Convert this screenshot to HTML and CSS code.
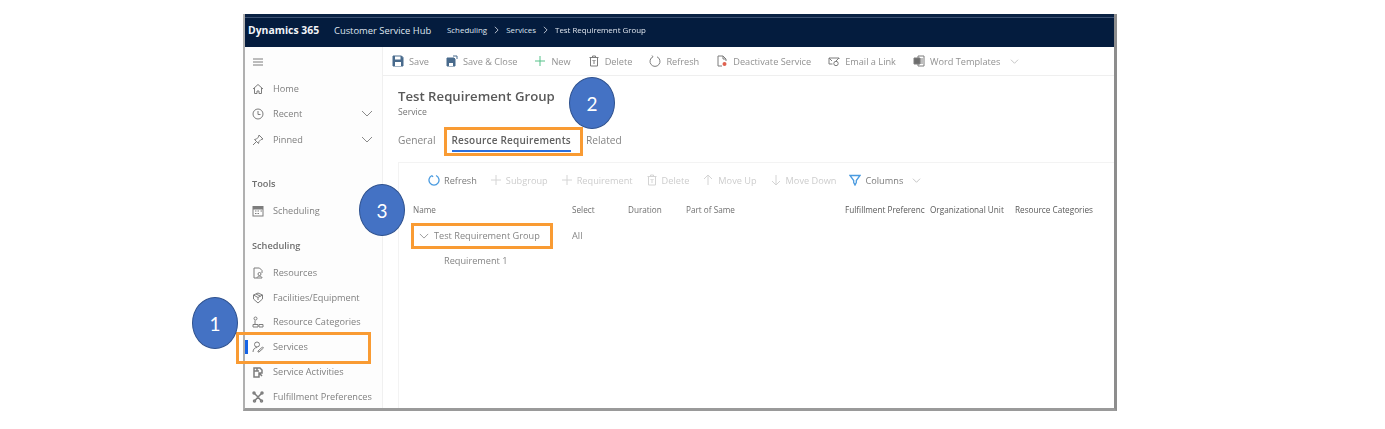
FILE: index.html
```html
<!DOCTYPE html>
<html lang="en">
<head>
    <meta charset="UTF-8">
    <title>Test Requirement Group</title>
    <link rel="stylesheet" href="styles.css">
</head>
<body>
    <div class="shot">
        <div class="topbar">
            <span class="brand">Dynamics 365</span>
            <span class="app">Customer Service Hub</span>
            <span class="crumbs">
                <span class="crumb-first">Scheduling</span>
                <svg class="sep" viewBox="0 0 6 10"><path d="M1 1l4 4-4 4"/></svg>
                <span>Services</span>
                <svg class="sep" viewBox="0 0 6 10"><path d="M1 1l4 4-4 4"/></svg>
                <span>Test Requirement Group</span>
            </span>
        </div>
        <div class="content">
            <nav class="sidebar">
                <div class="burger"><svg class="icon" viewBox="0 0 12 12"><path d="M1 3h10M1 6h10M1 9h10"/></svg></div>
                <div class="nav-item"><svg class="icon" viewBox="0 0 12 12"><path d="M1 6l5-4.500L11 6M2.500 5v5.500h2.500V8h2v2.500h2.500V5"/></svg>Home</div>
                <div class="nav-item"><svg class="icon" viewBox="0 0 12 12"><circle cx="6" cy="6" r="5"/><path d="M6 3v3.500h2.500"/></svg>Recent<svg class="chev" viewBox="0 0 12 7"><path d="M1 1l5 5 5-5"/></svg></div>
                <div class="nav-item pinned"><svg class="icon" viewBox="0 0 12 12"><path d="M7 1l4 4-2 .5-2 2-.5 2L2.500 5.500l2-.5 2-2zM4.500 7.500L1 11"/></svg>Pinned<svg class="chev" viewBox="0 0 12 7"><path d="M1 1l5 5 5-5"/></svg></div>
                <div class="nav-head tools">Tools</div>
                <div class="nav-item sched"><svg class="icon" viewBox="0 0 12 12"><rect x="1" y="1.500" width="10" height="9.500"/><path class="thick" d="M1 3h10"/><path d="M3 6h1.500M5.500 6H7M8.500 6H10M3 8.500h1.500M5.500 8.500H7"/></svg>Scheduling</div>
                <div class="nav-head group">Scheduling</div>
                <div class="nav-item res"><svg class="icon" viewBox="0 0 12 12"><path d="M7.500 1H2v10h3M7.500 1L10 3.500V6"/><circle cx="7.500" cy="7" r="1.500"/><path d="M5 11c0-2.500 5-2.500 5 0z"/></svg>Resources</div>
                <div class="nav-item"><svg class="icon" viewBox="0 0 12 12"><path d="M6 1l4.500 2v4L6 11 1.500 7V3zM1.500 3L6 5.500 10.500 3M6 5.500V8M4 2l4.500 2.200"/></svg>Facilities/Equipment</div>
                <div class="nav-item tight"><svg class="icon" viewBox="0 0 12 12"><circle cx="3.500" cy="2.500" r="1.500"/><path d="M3 4.500V8M1 8.500h5v2.500H1zM7 8.500h4v2.500H7z"/></svg>Resource Categories</div>
                <div class="nav-item current"><svg class="icon" viewBox="0 0 12 12"><circle cx="5" cy="3.500" r="2.500"/><path d="M1 11c0-3 2-4.500 4-4.500M6 10l4.500-4 1 1-4.500 4H6z"/></svg>Services</div>
                <div class="nav-item"><svg class="icon heavy" viewBox="0 0 12 12"><path d="M2 2h6l2 2v3H7v4H2zM2 5h5M7 7l3 3M5 2v3"/></svg>Service Activities</div>
                <div class="nav-item"><svg class="icon heavy" viewBox="0 0 12 12"><path d="M2.500 2.500L6 6l3.500-3.500M6 6l-3 3.500M6 6l3 3.500"/><circle cx="2" cy="2" r="1"/><circle cx="10" cy="2" r="1"/><circle cx="2.500" cy="10" r="1"/><circle cx="9.500" cy="10" r="1"/></svg>Fulfillment Preferences</div>
            </nav>
            <main class="main">
                <div class="cmdbar">
                    <span class="cmd"><svg class="icon save" viewBox="0 0 12 12"><path d="M1 1h8.500L11 2.500V11H1z"/><path class="wht" d="M3 1.500h5.500V4.500H3zM3 7h6v4H3z"/></svg>Save</span>
                    <span class="cmd"><svg class="icon save" viewBox="0 0 12 12"><path d="M1 3h7l1 1v7H1z"/><path class="wht" d="M3 8h4v3H3z"/><path d="M7 1h4v3" fill="none"/></svg>Save &amp; Close</span>
                    <span class="cmd"><svg class="icon plus-green" viewBox="0 0 12 12"><path d="M6 1v10M1 6h10"/></svg>New</span>
                    <span class="cmd"><svg class="icon" viewBox="0 0 12 12"><path d="M2.500 2.500h7V11h-7zM1.500 2.500h9M4.500 2.500V1h3v1.500M5 5v1h2V5M5 8h2"/></svg>Delete</span>
                    <span class="cmd"><svg class="icon" viewBox="0 0 12 12"><path d="M4 1.800A5 5 0 1 0 8 1.800M4 1.800l-1-1.300"/></svg>Refresh</span>
                    <span class="cmd"><svg class="icon" viewBox="0 0 12 12"><path d="M2 1h5l3 3v2M7 1v3h3M2 1v10h4"/><circle class="red" cx="8.500" cy="9" r="2"/></svg>Deactivate Service</span>
                    <span class="cmd"><svg class="icon" viewBox="0 0 12 12"><path d="M1 3h10v1M1 3v6h3.500M1 3l3 3M11 3L8 6"/><circle cx="8" cy="8.500" r="2.200"/></svg>Email a Link</span>
                    <span class="cmd"><svg class="icon word" viewBox="0 0 12 12"><path d="M5 1h6v10H5z" fill="none"/><path d="M1 3h6v6H1z"/><path d="M7 4h3M7 6h3M7 8h3" fill="none"/></svg>Word Templates<svg class="chev small" viewBox="0 0 12 7"><path d="M1 1l5 5 5-5"/></svg></span>
                </div>
                <div class="form">
                    <h1 class="title">Test Requirement Group</h1>
                    <div class="subtitle">Service</div>
                    <div class="tabs">
                        <span class="tab">General</span>
                        <span class="tab active">Resource Requirements</span>
                        <span class="tab">Related</span>
                    </div>
                    <section class="panel">
                        <div class="toolbar">
                            <span class="tool on"><svg class="icon blue" viewBox="0 0 12 12"><path d="M4 1.500A5 5 0 1 0 8 1.500M4 1.500l1 1.500"/></svg>Refresh</span>
                            <span class="tool"><svg class="icon faint" viewBox="0 0 12 12"><path d="M6 1v10M1 6h10"/></svg>Subgroup</span>
                            <span class="tool"><svg class="icon faint" viewBox="0 0 12 12"><path d="M6 1v10M1 6h10"/></svg>Requirement</span>
                            <span class="tool"><svg class="icon faint" viewBox="0 0 12 12"><path d="M2.500 2.500h7V11h-7zM1.500 2.500h9M4.500 2.500V1h3v1.500M5 5v1h2V5M5 8h2"/></svg>Delete</span>
                            <span class="tool"><svg class="icon faint" viewBox="0 0 12 12"><path d="M6 11V1M2 5l4-4 4 4"/></svg>Move Up</span>
                            <span class="tool"><svg class="icon faint" viewBox="0 0 12 12"><path d="M6 1v10M2 7l4 4 4-4"/></svg>Move Down</span>
                            <span class="tool on"><svg class="icon blue" viewBox="0 0 12 12"><path d="M1 1.500h10L7.300 6.500v2L6 11 4.700 8.500v-2z"/></svg>Columns<svg class="chev small" viewBox="0 0 12 7"><path d="M1 1l5 5 5-5"/></svg></span>
                        </div>
                        <div class="grid grid-head">
                            <span>Name</span>
                            <span>Select</span>
                            <span>Duration</span>
                            <span>Part of Same</span>
                            <span class="clip">Fulfillment Preference</span>
                            <span>Organizational Unit</span>
                            <span>Resource Categories</span>
                        </div>
                        <div class="grid row first">
                            <span class="group-name"><svg class="chev tiny" viewBox="0 0 12 7"><path d="M1 1l5 5 5-5"/></svg>Test Requirement Group</span>
                            <span>All</span>
                        </div>
                        <div class="grid row child">
                            <span>Requirement 1</span>
                        </div>
                    </section>
                </div>
            </main>
        </div>
    </div>

    <!-- annotations drawn on top of the screenshot -->
    <div class="mark mark-services"></div>
    <div class="mark mark-tab"></div>
    <div class="mark mark-group"></div>
    <div class="bubble bubble-1">1</div>
    <div class="bubble bubble-2">2</div>
    <div class="bubble bubble-3">3</div>
</body>
</html>
```

FILE: styles.css
```css
body {
    margin: 0;
    padding: 14px 0 0 243px;
    background: #ffffff;
    font-family: "Open Sans", Arial, sans-serif;
    color: #6a6a6a;
    overflow: hidden;
}

.shot {
    width: 874px;
    height: 397px;
    box-sizing: border-box;
    border-right: 3px solid #8d8d8d;
    border-bottom: 3px solid #9a9a9a;
    border-left: 2px solid #b0b0b0;
    display: flex;
    flex-direction: column;
    overflow: hidden;
    filter: blur(0.6px);
}

.topbar {
    height: 33px;
    flex: none;
    background: linear-gradient(#0a2244 0 3px, #3d5273 3px 4px, #041c3e 4px);
    box-sizing: border-box;
    display: flex;
    align-items: center;
    color: #dfe5ee;
    padding: 0 0 1px 3px;
    white-space: nowrap;
}

.brand {
    font-size: 10.400px;
    font-weight: 700;
    color: #f2f4f8;
    width: 86px;
}

.app {
    font-size: 9.400px;
    width: 113px;
}

.crumbs {
    display: flex;
    align-items: center;
    font-size: 7.900px;
    gap: 7px;
}

.sep {
    width: 5px;
    height: 8px;
    fill: none;
    stroke: #dfe5ee;
    stroke-width: 1;
}

.content {
    flex: 1;
    display: flex;
    min-height: 0;
}

.sidebar {
    width: 138px;
    flex: none;
    background: #fdfdfd;
    border-right: 1px solid #f0f0f0;
    box-sizing: border-box;
    font-size: 9.200px;
    color: #7f7f7f;
}

.icon {
    width: 12px;
    height: 12px;
    flex: none;
    fill: none;
    stroke: #7d7d7d;
    stroke-width: 1;
}

.icon.heavy {
    stroke-width: 1.500;
}

.icon .thick {
    stroke-width: 3;
}

.burger {
    height: 29px;
    padding-left: 7px;
    display: flex;
    align-items: center;
}

.nav-item {
    height: 25px;
    padding-left: 7px;
    display: flex;
    align-items: center;
    gap: 9px;
    white-space: nowrap;
    position: relative;
}

.nav-item .chev {
    margin-left: auto;
    margin-right: 9px;
}

.chev {
    width: 12px;
    height: 7px;
    fill: none;
    stroke: #8a8a8a;
    stroke-width: 1;
}

.chev.small {
    width: 9px;
    height: 5px;
    stroke: #b0b0b0;
    margin-left: 5px;
}

.chev.tiny {
    width: 10px;
    height: 6px;
    margin-right: 5px;
    margin-left: 6px;
}

.nav-head {
    height: 24px;
    padding-left: 7px;
    display: flex;
    align-items: center;
    font-weight: 600;
    color: #6e6e6e;
}

.pinned {
    margin-top: 1px;
}

.tools {
    margin-top: 19px;
}

.sched {
    margin-top: 3px;
}

.group {
    margin-top: 10px;
}

.res {
    margin-top: 3px;
}

.tight {
    margin-top: -1px;
}

.current::before {
    content: "";
    position: absolute;
    left: 0;
    top: 6px;
    width: 2.500px;
    height: 14px;
    background: #1463e6;
}

.main {
    flex: 1;
    min-width: 0;
    display: flex;
    flex-direction: column;
}

.cmdbar {
    height: 29px;
    flex: none;
    box-sizing: border-box;
    border-bottom: 1px solid #efefef;
    display: flex;
    align-items: center;
    padding-left: 9px;
    gap: 17px;
    font-size: 9.200px;
    color: #919191;
    white-space: nowrap;
}

.cmd {
    display: flex;
    align-items: center;
    gap: 5px;
}

.icon.save {
    fill: #486a8c;
    stroke: #486a8c;
}

.icon.save .wht {
    fill: #ffffff;
    stroke: none;
}

.icon.plus-green {
    stroke: #56c28a;
}

.red {
    fill: #e0614f;
    stroke: none;
}

.icon.word path:nth-child(2) {
    fill: #6d6d6d;
}

.form {
    flex: 1;
    min-height: 0;
    padding: 11px 0 0 15px;
}

.title {
    margin: 0;
    font-size: 13.200px;
    line-height: 19px;
    font-weight: 600;
    color: #595959;
}

.subtitle {
    font-size: 8.700px;
    line-height: 12px;
    color: #757575;
}

.tabs {
    display: flex;
    margin-top: 12px;
    height: 24px;
    gap: 16px;
    font-size: 10.200px;
    color: #858585;
    line-height: 20px;
}

.tab.active {
    font-weight: 600;
    color: #606060;
    font-size: 10px;
    letter-spacing: 0.02em;
    height: 20px;
    border-bottom: 2px solid #2c6fdc;
}

.tab:last-child {
    margin-left: -1px;
}

.panel {
    margin-top: 8px;
    height: 260px;
    border-top: 1px solid #f3f3f3;
    border-left: 1px solid #f3f3f3;
}

.toolbar {
    height: 34px;
    display: flex;
    align-items: center;
    padding-left: 29px;
    gap: 13px;
    font-size: 9.200px;
    color: #cdcdcd;
    white-space: nowrap;
}

.tool {
    display: flex;
    align-items: center;
    gap: 4px;
}

.tool.on {
    color: #7b7b7b;
}

.icon.blue {
    stroke: #4a9be0;
    stroke-width: 1.300;
}

.icon.faint {
    stroke: #d4d4d4;
}

.grid {
    display: grid;
    grid-template-columns: 159px 56px 58px 159px 85px 85px 1fr;
    padding-left: 14px;
    white-space: nowrap;
}

.grid-head {
    height: 22px;
    align-items: center;
    font-size: 8.200px;
    color: #6f6f6f;
    margin-top: 1px;
}

.clip {
    overflow: hidden;
    width: 80px;
}

.grid-head span:nth-child(n+5) {
    color: #595959;
}

.row {
    height: 25px;
    align-items: center;
    font-size: 9.200px;
    color: #858585;
}

.row.first {
    margin-top: 3px;
}

.group-name {
    display: flex;
    align-items: center;
}

.child {
    padding-left: 45px;
    grid-template-columns: 1fr;
}

.mark {
    position: absolute;
    box-sizing: border-box;
    border: 3px solid #f99b33;
}

.mark-services {
    left: 236px;
    top: 332px;
    width: 135px;
    height: 32px;
}

.mark-tab {
    left: 444px;
    top: 127px;
    width: 139px;
    height: 29px;
}

.mark-group {
    left: 411px;
    top: 223px;
    width: 142px;
    height: 26px;
}

.bubble {
    position: absolute;
    width: 46px;
    height: 52px;
    box-sizing: border-box;
    border: 1px solid #2f528f;
    border-radius: 50%;
    background: #4472c4;
    color: #ffffff;
    font-family: Lato, "Open Sans", sans-serif;
    font-size: 19px;
    display: flex;
    align-items: center;
    justify-content: center;
}

.bubble-1 {
    left: 192px;
    top: 297px;
}

.bubble-2 {
    left: 569px;
    top: 77px;
}

.bubble-3 {
    left: 359px;
    top: 184px;
}
```
